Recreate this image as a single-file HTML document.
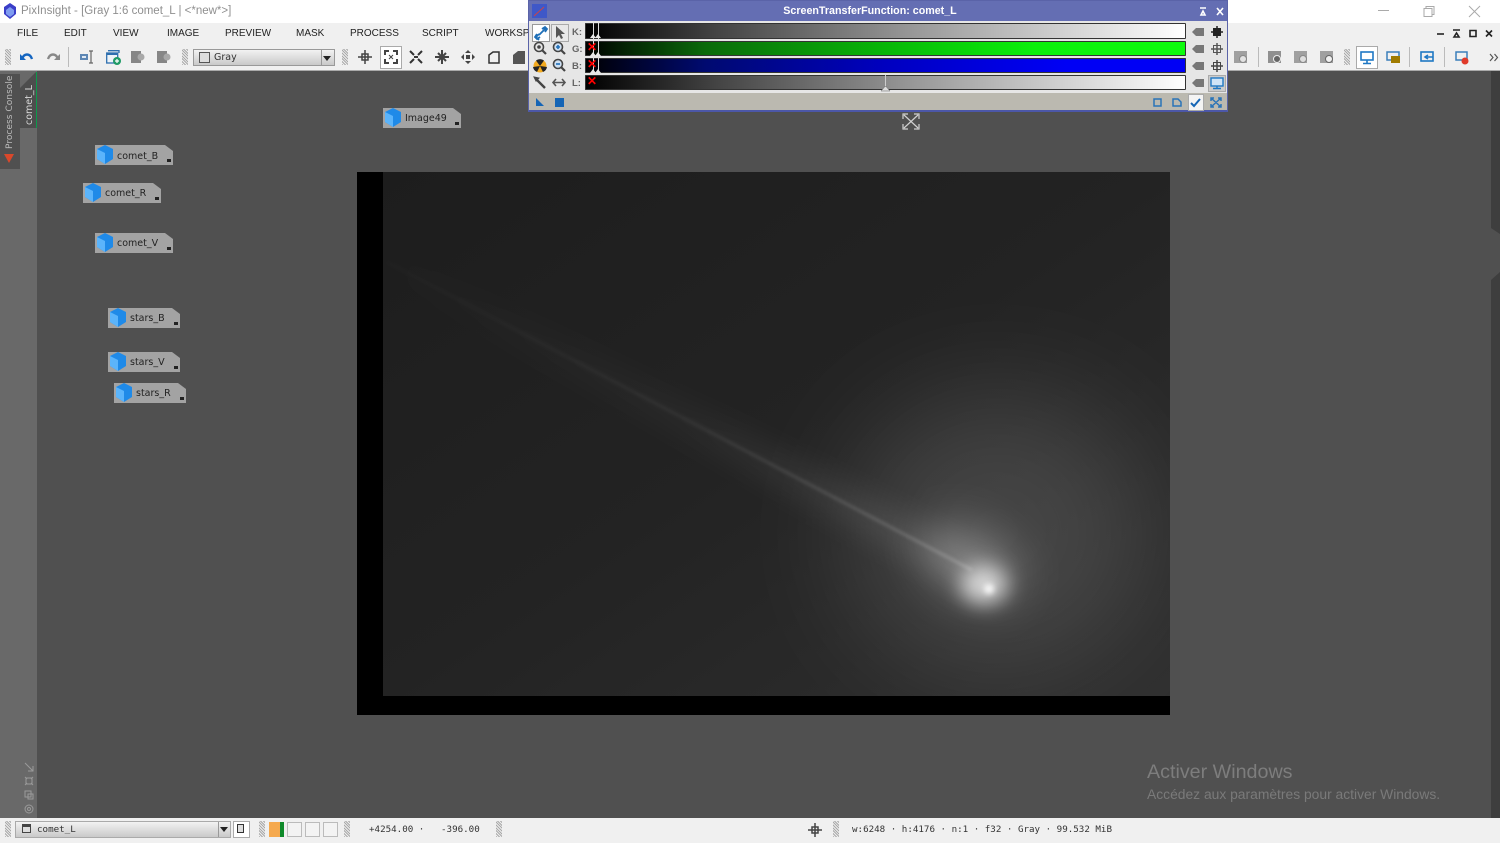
<!DOCTYPE html>
<html><head><meta charset="utf-8"><style>
html,body{margin:0;padding:0;width:1500px;height:843px;overflow:hidden;background:#505050;font-family:"Liberation Sans",sans-serif}
.a{position:absolute}
#t{left:0;top:0;width:1500px;height:23px;background:#fff;color:#8f8f8f;font-size:11.5px}
#m{left:0;top:23px;width:1500px;height:21px;background:#f0f0f0;font-size:10px;color:#222}
#m span{position:absolute;top:5px}
#b{left:0;top:44px;width:1500px;height:26px;background:#f0f0f0;border-bottom:1px solid #aaa;box-sizing:content-box}
.g{position:absolute;width:6px;background:repeating-linear-gradient(45deg,#aaa 0 1px,#eee 1px 2px)}
.ic{position:absolute;overflow:visible}
.icon{position:absolute;width:16px;height:16px;background:#8d8d8d;border-radius:1px}
#s{left:0;top:818px;width:1500px;height:25px;background:#f0f0f0;font-family:"DejaVu Sans Mono","Liberation Mono",monospace;font-size:9.2px;color:#333}
.chip{position:absolute;width:78px;height:20px;background:#a3a3a3;clip-path:polygon(0 0,70px 0,78px 6px,78px 20px,0 20px);font-family:"DejaVu Sans",sans-serif;font-size:9.5px;color:#222;line-height:20px}
.chip span{position:absolute;left:22px;top:1px}
.chip i{position:absolute;left:72px;top:14px;width:4px;height:3px;background:#222}
.chip svg{position:absolute;left:1px;top:0}
.sm{width:72px;clip-path:polygon(0 0,64px 0,72px 6px,72px 20px,0 20px)}
.sm i{left:66px}
#w{left:528px;top:0;width:700px;height:112px;background:#bbb9b0;box-sizing:border-box;border:1px solid #5a63a8;border-bottom:2px solid #4c57a8}
#wt{left:0;top:0;width:682px;height:20px;background:transparent;color:#fff;font-size:10.7px;font-weight:bold;text-align:center;line-height:20px}
#wtb{left:0;top:0;width:698px;height:20px;background:#646eb3}
#wb{left:0;top:20px;width:698px;height:72px;background:#e6e6e6}
.bar{position:absolute;left:56px;width:601px;height:15px;border-radius:1px;box-shadow:inset 0 0 0 1px #333}
.lb{position:absolute;left:43px;font-size:9.5px;font-weight:bold;color:#666}
.arm{position:absolute;width:1px;background:#ddd}
.x{position:absolute;color:#f00;font-weight:bold;font-size:12px;left:58px}
.tri{position:absolute;width:0;height:0;border:3px solid transparent;border-top:0;border-bottom:4px solid #e8e8e8}
</style></head><body>

<div id="t" class="a">
<svg class="ic" style="left:3px;top:3px" width="14" height="16" viewBox="0 0 14 16"><path d="M7 0L13 4V11L7 16L1 11V4Z" fill="#3a3ec8"/><path d="M7 4L11 7V11L7 14L3 11V7Z" fill="#7f9cf0"/></svg>
<span class="a" style="left:21px;top:5px;white-space:nowrap">PixInsight - [Gray 1:6 comet_L | &lt;*new*&gt;]</span>
<svg class="ic" style="left:1378px;top:5px" width="110" height="14" fill="none" stroke="#aaa"><path d="M0 5.5H11"/><path d="M46 3.5h8v8h-8zM48 3.5v-2h8v8h-2"/><path d="M91 1L102 12M102 1L91 12"/></svg>
</div>

<div id="m" class="a">
<span style="left:17px">FILE</span><span style="left:64px">EDIT</span><span style="left:113px">VIEW</span><span style="left:167px">IMAGE</span><span style="left:225px">PREVIEW</span><span style="left:296px">MASK</span><span style="left:350px">PROCESS</span><span style="left:422px">SCRIPT</span><span style="left:485px">WORKSP</span>
<svg class="ic" style="left:1435px;top:5px" width="60" height="12" fill="none" stroke="#222" stroke-width="1.6"><path d="M2 6H9"/><path d="M18 2H25M19 9L21.5 5L24 9Z"/><path d="M35 2.5h6v6h-6z"/><path d="M51 2.5L57 8.5M57 2.5L51 8.5"/></svg>
</div>

<div id="b" class="a">
<div class="g" style="left:5px;top:5px;height:16px"></div>
<svg class="ic" style="left:19px;top:6px" width="16" height="14" fill="none" stroke="#1565c0" stroke-width="2.4"><path d="M3 9C5 3 11 3 13 9"/><path d="M1 4V10H7" stroke-width="0" fill="#1565c0"/></svg>
<svg class="ic" style="left:45px;top:6px" width="16" height="14" fill="none" stroke="#888" stroke-width="2.4"><path d="M3 9C5 3 11 3 13 9"/><path d="M15 4V10H9" stroke-width="0" fill="#888"/></svg>
<div class="a" style="left:68px;top:3px;width:1px;height:20px;background:#bbb"></div>
<svg class="ic" style="left:80px;top:6px" width="14" height="14" fill="none"><rect x="0" y="4" width="8" height="6" fill="#5d86b4"/><rect x="2" y="6" width="4" height="2" fill="#dfe8f2"/><path d="M11 1V13M9 1H13M9 13H13" stroke="#666" stroke-width="1.2"/></svg>
<svg class="ic" style="left:106px;top:6px" width="16" height="15" fill="none"><rect x=".7" y="3" width="11" height="10" fill="#eef3f8" stroke="#2e6faf" stroke-width="1.3"/><path d="M2 .7H13V3" stroke="#2e6faf" stroke-width="1.3"/><rect x="1" y="3" width="11" height="2" fill="#2e6faf"/><circle cx="11" cy="11" r="4" fill="#1f9a66"/><path d="M9 11H13M11 9V13" stroke="#fff" stroke-width="1.2"/></svg>
<svg class="ic" style="left:131px;top:7px" width="14" height="12"><rect x="0" y="0" width="10" height="12" fill="#868686"/><circle cx="10" cy="6" r="3.5" fill="#a8a8a8"/></svg>
<svg class="ic" style="left:157px;top:7px" width="14" height="12"><rect x="0" y="0" width="10" height="12" fill="#868686"/><circle cx="10" cy="6" r="3.5" fill="#a8a8a8"/></svg>
<div class="g" style="left:182px;top:5px;height:16px"></div>
<div class="a" style="left:193px;top:5px;width:142px;height:17px;box-sizing:border-box;border:1px solid #999;background:linear-gradient(#f2f2f2,#c9c9c9);font-family:'DejaVu Sans',sans-serif;font-size:9.5px;color:#333;line-height:16px;padding-left:20px">Gray
<div class="a" style="left:5px;top:2px;width:9px;height:9px;border:1px solid #555;background:#ddd"></div>
<div class="a" style="left:129px;top:6px;border:4px solid transparent;border-top:5px solid #222"></div>
<div class="a" style="left:127px;top:0;width:1px;height:15px;background:#999"></div></div>
<div class="g" style="left:342px;top:5px;height:16px"></div>
<svg class="ic" style="left:358px;top:6px" width="14" height="14" fill="none" stroke="#444" stroke-width="1.5"><path d="M7 0V14M0 7H14"/><rect x="4" y="4" width="6" height="6"/></svg>
<div class="a" style="left:380px;top:2px;width:20px;height:21px;background:#fff;border:1px solid #aaa"></div>
<svg class="ic" style="left:384px;top:6px" width="14" height="14" fill="none" stroke="#444" stroke-width="2"><path d="M1 5V1H5M9 1H13V5M13 9V13H9M5 13H1V9"/><path d="M5 5L9 9M9 5L5 9" stroke-width="1"/></svg>
<svg class="ic" style="left:409px;top:6px" width="14" height="14" fill="none" stroke="#333" stroke-width="2"><path d="M1 1L5 5M13 1L9 5M1 13L5 9M13 13L9 9"/><path d="M5 7H9"/></svg>
<svg class="ic" style="left:435px;top:6px" width="14" height="14" fill="none" stroke="#444" stroke-width="2"><path d="M7 0V14M0 7H14M3 3L11 11M11 3L3 11"/></svg>
<svg class="ic" style="left:461px;top:6px" width="14" height="14" fill="#444"><path d="M7 0L10 3H4ZM7 14L4 11H10ZM0 7L3 4V10ZM14 7L11 10V4Z"/><rect x="5" y="5" width="4" height="4"/></svg>
<svg class="ic" style="left:488px;top:7px" width="12" height="13" fill="none" stroke="#333" stroke-width="1.5"><path d="M1 4L5 1H11V12H1Z"/></svg>
<svg class="ic" style="left:513px;top:7px" width="12" height="13" fill="#555"><path d="M0 4L5 0H12V13H0Z"/></svg>
<svg class="ic" style="left:1234px;top:7px" width="14" height="13"><rect width="13" height="12" fill="#a0a0a0"/><circle cx="9" cy="8" r="3.5" fill="#e2e2e2" stroke="#888"/></svg>
<div class="a" style="left:1258px;top:3px;width:1px;height:20px;background:#bbb"></div>
<svg class="ic" style="left:1268px;top:7px" width="14" height="13"><rect width="13" height="12" fill="#909090"/><circle cx="9" cy="8" r="3.5" fill="#666" stroke="#eee"/></svg>
<svg class="ic" style="left:1294px;top:7px" width="14" height="13"><rect width="13" height="12" fill="#a0a0a0"/><circle cx="9" cy="8" r="3.5" fill="#ddd" stroke="#888"/></svg>
<svg class="ic" style="left:1320px;top:7px" width="14" height="13"><rect width="13" height="12" fill="#a0a0a0"/><circle cx="9" cy="8" r="3.5" fill="#f0f0f0" stroke="#666"/></svg>
<div class="g" style="left:1344px;top:5px;height:16px"></div>
<div class="a" style="left:1356px;top:2px;width:20px;height:21px;background:#fff;border:1px solid #aaa"></div>
<svg class="ic" style="left:1360px;top:7px" width="14" height="14" fill="none" stroke="#1f78c4" stroke-width="1.6"><rect x="1" y="1" width="12" height="8"/><path d="M7 9V12M3 12.5H11"/></svg>
<svg class="ic" style="left:1386px;top:7px" width="14" height="14" fill="none" stroke="#3a7fba" stroke-width="1.5"><rect x="1" y="1" width="12" height="8"/></svg>
<div class="a" style="left:1391px;top:12px;width:9px;height:7px;background:#a07b00"></div>
<div class="a" style="left:1409px;top:3px;width:1px;height:20px;background:#bbb"></div>
<svg class="ic" style="left:1420px;top:7px" width="14" height="14" fill="none" stroke="#1f78c4" stroke-width="1.6"><rect x="1" y="1" width="12" height="9"/><path d="M5 6H13M8 4L5 6L8 8"/></svg>
<div class="a" style="left:1444px;top:3px;width:1px;height:20px;background:#bbb"></div>
<svg class="ic" style="left:1455px;top:7px" width="14" height="14" fill="none" stroke="#3a7fba" stroke-width="1.5"><rect x="1" y="1" width="11" height="8"/><circle cx="10" cy="10" r="3.5" fill="#e03a2a" stroke="none"/></svg>
<svg class="ic" style="left:1489px;top:9px" width="10" height="9" fill="none" stroke="#555" stroke-width="1.2"><path d="M1 1L4 4.5L1 8M5.5 1L8.5 4.5L5.5 8"/></svg>
</div>

<!-- left side -->
<div class="a" style="left:0;top:71px;width:37px;height:747px;background:#696969"></div>
<div class="a" style="left:0;top:74px;width:20px;height:95px;background:#505050"></div>
<div class="a" style="left:20px;top:72px;width:17px;height:56px;background:#4d4d4d;clip-path:polygon(16px 0,17px 0,17px 56px,0 56px,0 16px);border-right:1px solid #0c9a4c;box-sizing:border-box"></div>
<div class="a" style="left:3px;top:75px;height:74px;width:14px;writing-mode:vertical-rl;transform:rotate(180deg);color:#bcbcbc;font-size:9.1px;line-height:14px;text-align:left;white-space:nowrap;font-family:'DejaVu Sans',sans-serif">Process Console</div>
<div class="a" style="left:23px;top:87px;height:38px;width:14px;writing-mode:vertical-rl;transform:rotate(180deg);color:#d8d8d8;font-size:9.5px;line-height:14px;white-space:nowrap;font-family:'DejaVu Sans',sans-serif">comet_L</div>
<svg class="ic" style="left:4px;top:154px" width="10" height="9"><path d="M0 0H10L5 9Z" fill="#d9482b"/></svg>
<svg class="ic" style="left:24px;top:762px" width="10" height="52" fill="none" stroke="#9a9a9a"><path d="M1 1L9 9M9 4V9H4"/><path d="M2 16h6v6h-6zM1 15L3 17M9 15L7 17M1 23L3 21M9 23L7 21"/><path d="M1 29h6v6h-6zM4 32h5v5h-5z"/><circle cx="5" cy="47" r="4"/><circle cx="5" cy="47" r="1.5"/></svg>

<!-- main image -->
<svg class="a" style="left:357px;top:172px" width="813" height="543" viewBox="0 0 813 543">
<defs>
<filter id="f1" x="-100%" y="-100%" width="300%" height="300%"><feGaussianBlur stdDeviation="55"/></filter>
<filter id="f2" x="-80%" y="-80%" width="260%" height="260%"><feGaussianBlur stdDeviation="10"/></filter>
<filter id="f3" x="-100%" y="-100%" width="300%" height="300%"><feGaussianBlur stdDeviation="3"/></filter>
<filter id="f4" x="-20%" y="-200%" width="140%" height="500%"><feGaussianBlur stdDeviation="1.6"/></filter>
<filter id="f5" x="-20%" y="-200%" width="140%" height="500%"><feGaussianBlur stdDeviation="14"/></filter>
<filter id="f6" x="-100%" y="-100%" width="300%" height="300%"><feGaussianBlur stdDeviation="22"/></filter>
<clipPath id="c"><rect x="26" y="0" width="787" height="524"/></clipPath>
<linearGradient id="bg" x1="0" y1="0" x2="1" y2="1"><stop offset="0" stop-color="#1d1d1d"/><stop offset=".5" stop-color="#232323"/><stop offset="1" stop-color="#2f2f2f"/></linearGradient>
<linearGradient id="tl" x1="30" y1="90" x2="620" y2="400" gradientUnits="userSpaceOnUse"><stop offset="0" stop-color="#fff" stop-opacity=".01"/><stop offset=".5" stop-color="#fff" stop-opacity=".06"/><stop offset="1" stop-color="#fff" stop-opacity=".2"/></linearGradient>
</defs>
<rect width="813" height="543" fill="#000"/>
<rect x="26" width="787" height="524" fill="url(#bg)"/>
<g clip-path="url(#c)">
<ellipse cx="640" cy="360" rx="150" ry="140" fill="#fff" opacity=".13" filter="url(#f1)"/>
<path d="M30 90L640 412" stroke="url(#tl)" stroke-width="34" fill="none" filter="url(#f5)" opacity=".55"/>
<path d="M30 90L615 398" stroke="url(#tl)" stroke-width="3" fill="none" filter="url(#f4)"/>
<ellipse cx="615" cy="390" rx="52" ry="32" transform="rotate(30 615 390)" fill="#fff" opacity=".28" filter="url(#f6)"/>
<ellipse cx="627" cy="413" rx="23" ry="19" fill="#fff" opacity=".72" filter="url(#f2)"/>
<circle cx="632" cy="417" r="5" fill="#fff" opacity=".9" filter="url(#f3)"/>
</g>
</svg>

<!-- chips -->
<div class="chip" style="left:383px;top:108px"><svg width="18" height="20" viewBox="0 0 18 20"><path d="M9 0L17 4V14L9 19L1 14V4Z" fill="#1f8ae8"/><path d="M1 4L9 8V19L1 14Z" fill="#5bb4fb"/></svg><span>Image49</span><i></i></div>
<div class="chip" style="left:95px;top:145px"><svg width="18" height="20" viewBox="0 0 18 20"><path d="M9 0L17 4V14L9 19L1 14V4Z" fill="#1f8ae8"/><path d="M1 4L9 8V19L1 14Z" fill="#5bb4fb"/></svg><span style="top:2px">comet_B</span><i></i></div>
<div class="chip" style="left:83px;top:183px"><svg width="18" height="20" viewBox="0 0 18 20"><path d="M9 0L17 4V14L9 19L1 14V4Z" fill="#1f8ae8"/><path d="M1 4L9 8V19L1 14Z" fill="#5bb4fb"/></svg><span>comet_R</span><i></i></div>
<div class="chip" style="left:95px;top:233px"><svg width="18" height="20" viewBox="0 0 18 20"><path d="M9 0L17 4V14L9 19L1 14V4Z" fill="#1f8ae8"/><path d="M1 4L9 8V19L1 14Z" fill="#5bb4fb"/></svg><span>comet_V</span><i></i></div>
<div class="chip sm" style="left:108px;top:308px"><svg width="18" height="20" viewBox="0 0 18 20"><path d="M9 0L17 4V14L9 19L1 14V4Z" fill="#1f8ae8"/><path d="M1 4L9 8V19L1 14Z" fill="#5bb4fb"/></svg><span>stars_B</span><i></i></div>
<div class="chip sm" style="left:108px;top:352px"><svg width="18" height="20" viewBox="0 0 18 20"><path d="M9 0L17 4V14L9 19L1 14V4Z" fill="#1f8ae8"/><path d="M1 4L9 8V19L1 14Z" fill="#5bb4fb"/></svg><span>stars_V</span><i></i></div>
<div class="chip sm" style="left:114px;top:383px"><svg width="18" height="20" viewBox="0 0 18 20"><path d="M9 0L17 4V14L9 19L1 14V4Z" fill="#1f8ae8"/><path d="M1 4L9 8V19L1 14Z" fill="#5bb4fb"/></svg><span>stars_R</span><i></i></div>

<svg class="ic" style="left:902px;top:113px" width="18" height="17" fill="none" stroke="#d0d0d0" stroke-width="1.2"><path d="M2 2L16 15M16 2L2 15M1 6V1H6M12 1H17V6M17 11V16H12M6 16H1V11"/></svg>

<!-- STF window -->
<div id="w" class="a">
<div id="wtb" class="a"></div>
<div id="wt" class="a">ScreenTransferFunction: comet_L</div>
<svg class="ic" style="left:3px;top:3px" width="15" height="14"><rect width="15" height="14" fill="#3f58c8"/><path d="M2 12L12 3" stroke="#c44" fill="none"/></svg>
<svg class="ic" style="left:669px;top:6px" width="26" height="9" fill="none" stroke="#fff" stroke-width="1.6"><path d="M2 1H8M3 8L5 4L7 8Z"/><path d="M19 1L25 8M25 1L19 8"/></svg>
<div id="wb" class="a"></div>
<div class="bar" style="top:22px;height:16px;background:linear-gradient(90deg,#000,#444 22%,#999 55%,#ddd 85%,#fff)"></div>
<div class="bar" style="top:40px;background:linear-gradient(90deg,#000,#0a6a0a 20%,#07b707 50%,#0bf00b 75%,#0dfc0d)"></div>
<div class="bar" style="top:57px;background:linear-gradient(90deg,#000,#000a70 20%,#0000c0 50%,#0000f5 80%)"></div>
<div class="bar" style="top:74px;background:linear-gradient(90deg,#000,#444 22%,#999 55%,#ddd 85%,#fff)"></div>
<span class="lb" style="top:26px">K:</span><span class="lb" style="top:43px">G:</span><span class="lb" style="top:60px">B:</span><span class="lb" style="top:77px">L:</span>
<div class="arm" style="left:64px;top:22px;height:50px"></div><div class="arm" style="left:69px;top:22px;height:50px"></div>
<div class="tri" style="left:61px;top:33px"></div><div class="tri" style="left:66px;top:33px"></div>
<div class="tri" style="left:61px;top:51px"></div><div class="tri" style="left:66px;top:51px"></div>
<div class="tri" style="left:61px;top:68px"></div><div class="tri" style="left:66px;top:68px"></div>
<div class="x" style="top:39px">✕</div><div class="x" style="top:56px">✕</div><div class="x" style="top:73px">✕</div>
<div class="arm" style="left:356px;top:74px;height:15px;background:#ccc"></div>
<svg class="ic" style="left:352px;top:85px" width="9" height="5"><path d="M0 5L4.5 0L9 5Z" fill="#ddd" stroke="#666" stroke-width=".5"/></svg>
<!-- left tools -->
<div class="a" style="left:3px;top:23px;width:16px;height:16px;background:#fff;border:1px solid #999"></div>
<svg class="ic" style="left:5px;top:25px" width="14" height="14" fill="none" stroke="#1f6fb8" stroke-width="1.8"><path d="M2 11L5 14M5 8L2 11M9 5L12 2M5 9L9 5M8 3L11 1L13 3L11 6M3 8L1 11L3 13L6 11"/></svg>
<div class="a" style="left:22px;top:23px;width:16px;height:16px;background:#e8e8e8;border:1px solid #aaa"></div>
<svg class="ic" style="left:26px;top:25px" width="10" height="14"><path d="M1 0V12L4 9L6 13L8 12L6 8H10Z" fill="#555"/></svg>
<svg class="ic" style="left:4px;top:40px" width="14" height="14" fill="none" stroke="#444" stroke-width="1.6"><circle cx="6" cy="6" r="4.5"/><circle cx="6" cy="6" r="1" fill="#336"/><path d="M9 9L13 13" stroke-width="2.2"/></svg>
<svg class="ic" style="left:23px;top:40px" width="14" height="14" fill="none" stroke="#444" stroke-width="1.6"><circle cx="6" cy="6" r="4.5" fill="#cfe0f2"/><path d="M4 6H8M6 4V8" stroke="#1f6fb8"/><path d="M9 9L13 13" stroke-width="2.2"/></svg>
<svg class="ic" style="left:4px;top:58px" width="14" height="14"><circle cx="7" cy="7" r="6.5" fill="#f2aa1f"/><path d="M7 7L3 1.5A6.5 6.5 0 0 1 11 1.5ZM7 7L14 8A6.5 6.5 0 0 1 10 13ZM7 7L4 13A6.5 6.5 0 0 1 0 8Z" fill="#222"/></svg>
<svg class="ic" style="left:23px;top:57px" width="14" height="14" fill="none" stroke="#444" stroke-width="1.6"><circle cx="6" cy="6" r="4.5" fill="#cfe0f2"/><path d="M4 6H8" stroke="#1f6fb8"/><path d="M9 9L13 13" stroke-width="2.2"/></svg>
<svg class="ic" style="left:4px;top:75px" width="14" height="14" fill="none" stroke="#444" stroke-width="2.4"><path d="M3 3L12 12"/><path d="M1 1L3 5L6 2Z" fill="#444" stroke-width="1"/></svg>
<svg class="ic" style="left:23px;top:76px" width="14" height="11" fill="none" stroke="#555" stroke-width="1.6"><path d="M1 5.5H13M4 2L1 5.5L4 9M10 2L13 5.5L10 9"/></svg>
<!-- right tools -->
<svg class="ic" style="left:663px;top:26px" width="12" height="62" fill="#777"><path d="M0 5L4 1H12V9H4Z"/><path d="M0 22L4 18H12V26H4Z"/><path d="M0 39L4 35H12V43H4Z"/><path d="M0 56L4 52H12V60H4Z"/></svg>
<svg class="ic" style="left:682px;top:25px" width="12" height="12" fill="#222"><rect x="2" y="2" width="8" height="8"/><path d="M6 0V12M0 6H12" stroke="#222" stroke-width="1.5"/></svg>
<svg class="ic" style="left:682px;top:42px" width="12" height="12" fill="none" stroke="#555"><rect x="2.5" y="2.5" width="7" height="7"/><path d="M6 0V12M0 6H12" stroke-width="1.5"/></svg>
<svg class="ic" style="left:682px;top:59px" width="12" height="12" fill="none" stroke="#444"><rect x="2.5" y="2.5" width="7" height="7"/><path d="M6 0V12M0 6H12" stroke-width="1.5"/></svg>
<div class="a" style="left:679px;top:74px;width:16px;height:15px;background:#ccc;border:1px solid #aaa"></div>
<svg class="ic" style="left:681px;top:76px" width="14" height="13" fill="#cfe4f7" stroke="#1f78c4" stroke-width="1.4"><rect x="1" y="1" width="12" height="8"/><path d="M7 9V11M3 11.5H11" fill="none"/></svg>
<!-- bottom row -->
<svg class="ic" style="left:6px;top:96px" width="10" height="10"><path d="M1 9V1L9 9Z" fill="#1565b5"/></svg>
<div class="a" style="left:26px;top:97px;width:9px;height:9px;background:#1565b5"></div>
<svg class="ic" style="left:624px;top:97px" width="60" height="10" fill="none" stroke="#2a74b8" stroke-width="1.5"><rect x="1" y="1" width="7" height="7"/><path d="M20 1H25L28 4V8H20Z"/></svg>
<div class="a" style="left:659px;top:93px;width:14px;height:15px;background:#f4f4f4;border:1px solid #aaa"></div>
<svg class="ic" style="left:661px;top:97px" width="11" height="10" fill="none" stroke="#1565b5" stroke-width="2"><path d="M1 5L4 8L10 1"/></svg>
<svg class="ic" style="left:681px;top:96px" width="12" height="11" fill="none" stroke="#2a74b8" stroke-width="1.5"><path d="M1 1L11 10M11 1L1 10M1 4V1H4M8 1H11V4M11 7V10H8M4 10H1V7"/></svg>
</div>

<!-- right dark strip -->
<div class="a" style="left:1491px;top:71px;width:9px;height:747px;background:#3e3e3e"></div>
<div class="a" style="left:1491px;top:228px;width:9px;height:52px;background:#505050;clip-path:polygon(0 0,9px 6px,9px 44px,0 52px)"></div>

<!-- Watermark -->
<div class="a" style="left:1147px;top:761px;color:#7d7d7d;font-size:19.7px;white-space:nowrap">Activer Windows</div>
<div class="a" style="left:1147px;top:786px;color:#7a7a7a;font-size:13.85px;white-space:nowrap">Accédez aux paramètres pour activer Windows.</div>

<!-- status bar -->
<div id="s" class="a">
<div class="g" style="left:5px;top:3px;height:16px"></div>
<div class="a" style="left:15px;top:3px;width:216px;height:17px;box-sizing:border-box;border:1px solid #aaa;background:linear-gradient(#f2f2f2,#c9c9c9);line-height:15px;padding-left:21px;color:#333">comet_L
<div class="a" style="left:6px;top:2px;width:9px;height:9px;border:1px solid #444;border-top:3px solid #444;box-sizing:border-box;background:#ddd"></div>
<div class="a" style="left:202px;top:0;width:1px;height:15px;background:#999"></div>
<div class="a" style="left:204px;top:5px;border:4px solid transparent;border-top:5px solid #222"></div></div>
<div class="a" style="left:233px;top:3px;width:15px;height:15px;background:#fff;border:1px solid #aaa"></div>
<div class="a" style="left:237px;top:6px;width:7px;height:9px;border:1.5px solid #333;box-sizing:border-box;background:#ddd"></div>
<div class="g" style="left:259px;top:3px;height:16px"></div>
<div class="a" style="left:269px;top:4px;width:15px;height:15px;background:#f5a94e;border-right:4px solid #0f8a2a;box-sizing:border-box"></div>
<div class="a" style="left:287px;top:4px;width:15px;height:15px;background:#f3f3f3;border:1px solid #bbb;box-sizing:border-box"></div>
<div class="a" style="left:305px;top:4px;width:15px;height:15px;background:#f3f3f3;border:1px solid #bbb;box-sizing:border-box"></div>
<div class="a" style="left:323px;top:4px;width:15px;height:15px;background:#f3f3f3;border:1px solid #bbb;box-sizing:border-box"></div>
<div class="g" style="left:344px;top:3px;height:16px"></div>
<span class="a" style="left:369px;top:6px;white-space:nowrap">+4254.00 ·</span>
<span class="a" style="left:441px;top:6px;white-space:nowrap">-396.00</span>
<div class="g" style="left:496px;top:3px;height:16px"></div>
<svg class="ic" style="left:808px;top:5px" width="14" height="14" fill="none" stroke="#444" stroke-width="1.5"><path d="M7 0V14M0 7H14"/><rect x="4" y="4" width="6" height="6"/></svg>
<div class="g" style="left:833px;top:3px;height:16px"></div>
<span class="a" style="left:852px;top:6px;white-space:nowrap">w:6248 · h:4176 · n:1 · f32 · Gray · 99.532 MiB</span>
</div>
</body></html>
